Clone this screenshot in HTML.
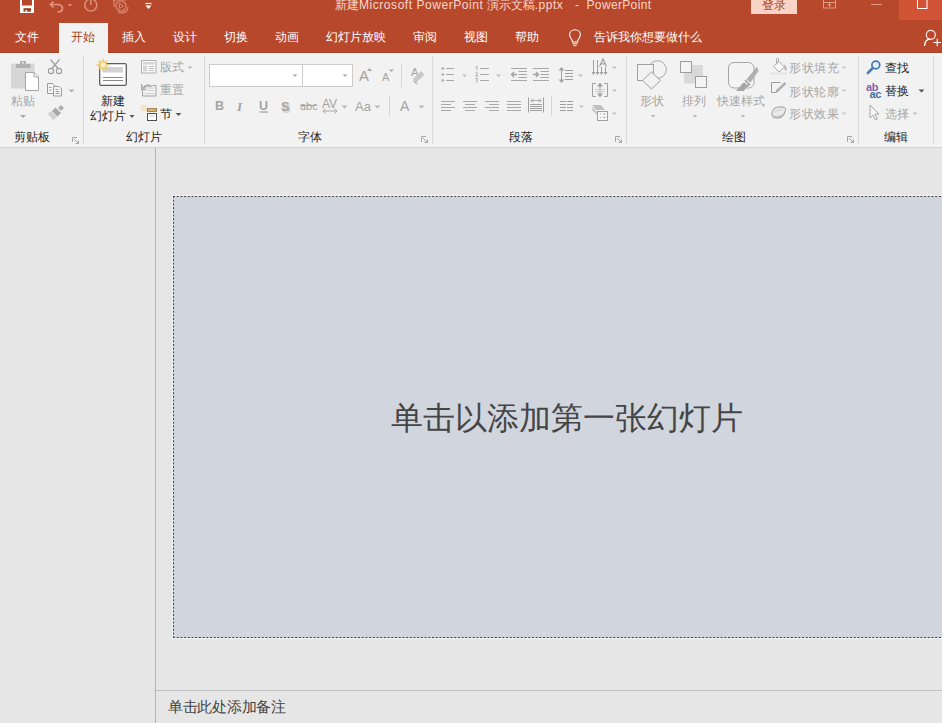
<!DOCTYPE html>
<html><head><meta charset="utf-8">
<style>
*{margin:0;padding:0;box-sizing:border-box}
html,body{width:942px;height:723px;overflow:hidden;background:#e6e6e6;font-family:"Liberation Sans",sans-serif}
.a{position:absolute;white-space:nowrap}
#top{position:absolute;left:0;top:0;width:942px;height:53px;background:#b8482b}
#ribbon{position:absolute;left:0;top:53px;width:942px;height:95px;background:#f2f2f2;border-bottom:1px solid #d4d4d4}
.tab{position:absolute;top:29px;font-size:12px;line-height:17px;color:#fff;white-space:nowrap}
.sep{position:absolute;top:56px;width:1px;height:88px;background:#dadada}
.gl{position:absolute;top:129px;font-size:12px;line-height:17px;color:#262626;white-space:nowrap}
.t{position:absolute;font-size:12px;line-height:17px;color:#262626;white-space:nowrap}
.g{color:#a6a6a6}
.L{position:absolute;font-family:"Liberation Sans",sans-serif;color:#a3a3a3;white-space:nowrap;line-height:1}
</style></head><body>
<div id="top"></div>
<div class="a" style="left:59px;top:23px;width:49px;height:31px;background:#f2f2f2"></div>
<div id="ribbon"></div>
<div class="a" style="left:0;top:52px;width:59px;height:1px;background:#a9442b"></div><div class="a" style="left:108px;top:52px;width:834px;height:1px;background:#a9442b"></div>
<div class="a" style="left:0;top:53px;width:942px;height:1px;background:#f8f5ef"></div>
<!-- title -->
<div class="a" style="left:335px;top:-3px;font-size:12px;line-height:17px;color:#f7d6cb">新建<span style="letter-spacing:.55px">Microsoft PowerPoint</span> 演示文稿<span style="letter-spacing:.5px">.pptx</span></div>
<div class="a" style="left:575px;top:-3px;font-size:12px;line-height:17px;color:#f7d6cb">-</div>
<div class="a" style="left:586.5px;top:-3px;font-size:12px;line-height:17px;color:#f7d6cb;letter-spacing:.35px">PowerPoint</div>
<div class="a" style="left:751px;top:0;width:46px;height:14px;background:#f9d3c5"></div>
<div class="a" style="left:761.5px;top:-3px;font-size:12px;line-height:17px;color:#a33f22">登录</div>
<!-- tabs -->
<div class="tab" style="left:15px">文件</div>
<div class="tab" style="left:71px;color:#a33f28">开始</div>
<div class="tab" style="left:122px">插入</div>
<div class="tab" style="left:173px">设计</div>
<div class="tab" style="left:224px">切换</div>
<div class="tab" style="left:275px">动画</div>
<div class="tab" style="left:326px">幻灯片放映</div>
<div class="tab" style="left:413px">审阅</div>
<div class="tab" style="left:464px">视图</div>
<div class="tab" style="left:515px">帮助</div>
<div class="tab" style="left:594px">告诉我你想要做什么</div>
<!-- separators -->
<div class="sep" style="left:83px"></div>
<div class="sep" style="left:204px"></div>
<div class="sep" style="left:432px"></div>
<div class="sep" style="left:626px"></div>
<div class="sep" style="left:858px"></div>
<div class="sep" style="left:933px"></div>
<!-- group labels -->
<div class="gl" style="left:14px">剪贴板</div>
<div class="gl" style="left:126px">幻灯片</div>
<div class="gl" style="left:298px">字体</div>
<div class="gl" style="left:509px">段落</div>
<div class="gl" style="left:722px">绘图</div>
<div class="gl" style="left:884px">编辑</div>
<!-- ribbon texts -->
<div class="t g" style="left:11px;top:93px">粘贴</div>
<div class="t" style="left:101px;top:93px">新建</div>
<div class="t" style="left:90px;top:108px">幻灯片</div>
<div class="t g" style="left:160px;top:59px">版式</div>
<div class="t g" style="left:160px;top:82px">重置</div>
<div class="t" style="left:160px;top:106px">节</div>
<div class="t g" style="left:640px;top:93px">形状</div>
<div class="t g" style="left:682px;top:93px">排列</div>
<div class="t g" style="left:717px;top:93px">快速样式</div>
<div class="t g" style="left:789px;top:60px;letter-spacing:.6px">形状填充</div>
<div class="t g" style="left:789px;top:83.5px;letter-spacing:.6px">形状轮廓</div>
<div class="t g" style="left:789px;top:106px;letter-spacing:.6px">形状效果</div>
<div class="t" style="left:885px;top:60px">查找</div>
<div class="t" style="left:885px;top:83px">替换</div>
<div class="t g" style="left:885px;top:106px">选择</div>
<!-- latin glyphs -->
<div class="L" style="left:359px;top:67.5px;font-size:15px">A</div>
<div class="L" style="left:382px;top:71.5px;font-size:11px">A</div>
<div class="L" style="left:411px;top:67px;font-size:11px">A</div>
<div class="L" style="left:215px;top:100px;font-size:12.5px;font-weight:bold">B</div>
<div class="L" style="left:237px;top:100px;font-size:13px;font-style:italic;font-weight:bold;font-family:'Liberation Serif',serif">I</div>
<div class="L" style="left:259px;top:100px;font-size:12.5px;font-weight:bold">U</div>
<div class="L" style="left:281px;top:100px;font-size:13px;font-weight:bold;text-shadow:1px 1.5px 1px #cfcfcf">S</div>
<div class="L" style="left:300px;top:101px;font-size:11px">abc</div>
<div class="L" style="left:322px;top:98px;font-size:12px">AV</div>
<div class="L" style="left:355px;top:100px;font-size:13px">Aa</div>
<div class="L" style="left:400px;top:99px;font-size:14px">A</div>
<div class="L" style="left:866px;top:83px;font-size:11px;font-weight:bold;color:#8262ad;line-height:8px;letter-spacing:-.3px">ab</div>
<div class="L" style="left:869.5px;top:89.5px;font-size:11px;font-weight:bold;color:#3e6f9e;line-height:8px;letter-spacing:-.3px">ac</div>
<svg class="a" style="left:0;top:0" width="942" height="723" viewBox="0 0 942 723">
<defs>
<radialGradient id="sun"><stop offset="0" stop-color="#fff8d8"/><stop offset=".55" stop-color="#f4d27a"/><stop offset="1" stop-color="#f0c060" stop-opacity=".2"/></radialGradient>
</defs>
<g fill="none" stroke-width="1">
<!-- QAT -->
<rect x="20" y="-1" width="14" height="14" fill="#fff"/>
<rect x="22" y="-1" width="10" height="6.5" fill="#b7472a"/>
<rect x="23.5" y="8.2" width="7.5" height="3.5" fill="#a5401f"/>
<rect x="25.5" y="10" width="1.5" height="1.7" fill="#fff"/>
<path d="M51 4.5 H57 C60.5 4.5 62.5 6.3 62.5 8.3 C62.5 10.5 60.5 12 57.5 12" stroke="#df9580" stroke-width="1.7"/>
<path d="M53.5 1.5 L50.5 4.5 L53.5 7.5" stroke="#df9580" stroke-width="1.7"/>
<rect x="68.5" y="4" width="3" height="2" fill="#d98d77"/>
<circle cx="90.8" cy="5" r="6" stroke="#d98d77" stroke-width="1.6"/>
<path d="M90.8 -2 V5" stroke="#d98d77" stroke-width="1.6"/>
<path d="M113 0 H126 M114 0 V7 M118 12 C122 14 128 12 128 7" stroke="#d98d77" stroke-width="1.2"/>
<circle cx="121" cy="6" r="5" stroke="#d98d77" stroke-width="1.2"/>
<path d="M119.5 3.5 L123.5 6 L119.5 8.5 Z" stroke="#d98d77"/>
<path d="M145.5 3.5 H151.5" stroke="#fff" stroke-width="1.2"/>
<path d="M145.5 5.5 H151.5 L148.5 9 Z" fill="#fff"/>
<!-- window buttons -->
<rect x="823.5" y="-3" width="12" height="11" stroke="#e09a86"/>
<path d="M823.5 2.5 H835.5 M829.5 7.5 V3.5 M827.5 5.5 L829.5 3.5 L831.5 5.5" stroke="#e09a86"/>
<path d="M871 4.5 H882" stroke="#e09a86"/>
<rect x="899" y="0" width="43" height="20" fill="#d05335"/>
<rect x="917.5" y="-3" width="9.5" height="11.5" stroke="#fff"/>
<!-- tell me bulb, person -->
<path d="M572.3 40.5 C570.8 38.5 569.6 37 569.6 34.8 C569.6 31.8 572 29.8 575 29.8 C578 29.8 580.4 31.8 580.4 34.8 C580.4 37 579.2 38.5 577.7 40.5 V42 H572.3 Z" stroke="#fff" stroke-width="1.1"/>
<path d="M572.5 43.8 H577.5 M573.5 45.6 H576.5" stroke="#fff" stroke-width="1"/>
<circle cx="930.8" cy="34.8" r="4.5" stroke="#fdeee8" stroke-width="1.2"/>
<path d="M924.5 46 C925 41 927 39 930 39" stroke="#fff" stroke-width="1.3"/>
<path d="M933.5 42.5 H941 M937.2 38.8 V46.2" stroke="#fff" stroke-width="1.1"/>

<!-- clipboard -->
<rect x="11" y="63.5" width="23.5" height="25" fill="#d6d6d6"/>
<rect x="16" y="64" width="14.5" height="4" fill="#b1b1b1"/>
<rect x="20" y="61" width="6" height="3.5" fill="#b1b1b1"/>
<rect x="22" y="62" width="2" height="1.5" fill="#e8e8e8"/>
<path d="M25.5 72.5 H34 L38.5 77 V90.5 H25.5 Z" fill="#fff" stroke="#a6a6a6"/>
<path d="M34 72.5 V77 H38.5" stroke="#a6a6a6"/>
<path d="M20 115 L26 115 L23 118 Z" fill="#a6a6a6"/>
<!-- scissors -->
<path d="M50.5 59.5 L58.5 69 M59.5 59.5 L51.5 69" stroke="#a0a0a0" stroke-width="1.3"/>
<circle cx="51" cy="71" r="2.6" stroke="#a0a0a0" stroke-width="1.2"/>
<circle cx="59" cy="71" r="2.6" stroke="#a0a0a0" stroke-width="1.2"/>
<!-- copy -->
<path d="M47.5 83.5 H52.5 L54.5 85.5 V93.5 H47.5 Z" fill="#f6f6f6" stroke="#9c9c9c"/>
<path d="M53.5 86.5 H59 L61.5 89 V96 H53.5 Z" fill="#f6f6f6" stroke="#9c9c9c"/>
<path d="M49 87.5 H51.5 M49 90 H51.5 M55.5 89.5 H58 M55.5 91.5 H59.5 M55.5 93.5 H59.5" stroke="#a0a0a0"/>
<path d="M68.5 89.5 H74.5 L71.5 92.5 Z" fill="#b0b0b0"/>
<!-- painter -->
<path d="M61 105 L64 108 L61 111 L58 108 Z" fill="#b0b0b0"/>
<path d="M55.5 107.5 L61 113 L57.5 116.5 L52 111 Z" fill="#a8a8a8"/>
<path d="M51.8 111.3 L57.2 116.7 L53.5 120.5 L47.5 113.5 Z" fill="#d2d2d2"/>
<!-- new slide -->
<rect x="99.7" y="63.7" width="26.6" height="21.6" rx="1.2" fill="#fff" stroke="#5e5e5e" stroke-width="1.3"/>
<rect x="103" y="67" width="20" height="5.5" fill="#d2d2d2"/>
<path d="M103 77.5 H123 M103 80.5 H123" stroke="#7c7c7c" stroke-width=".9"/>
<g stroke="#efc770" stroke-width="1.6" opacity=".85"><path d="M103 58.5 V71.5 M96.5 65 H109.5 M98.5 60.5 L107.5 69.5 M107.5 60.5 L98.5 69.5"/></g>
<circle cx="103" cy="65" r="5" fill="url(#sun)"/>
<circle cx="103" cy="65" r="2.2" fill="#fff6d0"/>
<path d="M129.5 115 H134.5 L132 118 Z" fill="#5a5a5a"/>
<!-- layout -->
<rect x="141.5" y="60.5" width="14.5" height="12.5" fill="#fafafa" stroke="#b0b0b0"/>
<rect x="143" y="62" width="11.5" height="2.5" fill="#d6d6d6"/>
<rect x="143" y="65.5" width="4" height="6" fill="#d6d6d6"/>
<path d="M148.5 66.5 H154 M148.5 68.5 H154 M148.5 70.5 H154" stroke="#c2c2c2"/>
<path d="M187.5 66.5 H192.5 L190 69 Z" fill="#b8b8b8"/>
<!-- reset -->
<path d="M152.5 85.5 H156 V96 H142.5 V90.5" fill="none" stroke="#a0a0a0"/>
<path d="M144.5 88 H154 M147 90.5 H154 M144.5 93.5 H154" stroke="#d2d2d2"/>
<path d="M143 88.5 C145 85.5 148 84.5 151.5 86.5" stroke="#a6a6a6" stroke-width="1.6"/>
<path d="M141.8 84 V89.5 H146" stroke="#a6a6a6" stroke-width="1.4"/>
<!-- section -->
<path d="M144 104.5 V111.5 M140.5 108 H147.5 M141.5 105.5 L146.5 110.5 M146.5 105.5 L141.5 110.5" stroke="#f2c890" stroke-width=".9"/>
<circle cx="144" cy="108" r="1.3" fill="#fff0c8"/>
<rect x="147.5" y="108.7" width="9" height="2.6" fill="#ecc070" stroke="#8c6a3a" stroke-width=".9"/>
<rect x="147.5" y="113.5" width="9" height="7" fill="#fff" stroke="#4e4e4e"/>
<path d="M149.5 116 H154.5" stroke="#c0c0c0"/>
<path d="M175.5 113 H181.5 L178.5 116 Z" fill="#5a5a5a"/>

<!-- font group -->
<rect x="209.5" y="64.5" width="93" height="22" fill="#fff" stroke="#cbcbcb"/>
<rect x="302.5" y="64.5" width="50" height="22" fill="#fff" stroke="#cbcbcb"/>
<path d="M292.5 74.5 H297.5 L295 77 Z" fill="#b0b0b0"/>
<path d="M342.5 74.5 H347.5 L345 77 Z" fill="#b0b0b0"/>
<path d="M367 71 L369.5 68 L372 71 Z" fill="#a8a8a8"/>
<path d="M389 69.5 L391.5 72 L394 69.5 Z" fill="#a8a8a8"/>
<path d="M401.5 64 V87" stroke="#d6d6d6"/>
<path d="M413 79 L421 71 L424.5 74.5 L416.5 82.5 Z" fill="#c8c8c8"/>
<path d="M413.5 80.5 L417 84" stroke="#b8b8b8" stroke-width="1.5"/>
<path d="M341.5 105.5 H347.5 L344.5 108.5 Z" fill="#b8b8b8"/>
<path d="M374.5 105.5 H380.5 L377.5 108.5 Z" fill="#b8b8b8"/>
<path d="M389.5 96 V117" stroke="#d6d6d6"/>
<path d="M418.5 105.5 H424.5 L421.5 108.5 Z" fill="#b8b8b8"/>
<path d="M323 111 H337 M323 111 L325.5 108.5 M323 111 L325.5 113.5 M337 111 L334.5 108.5 M337 111 L334.5 113.5" stroke="#a8a8a8"/>
<path d="M259.5 112 H268" stroke="#a0a0a0" stroke-width="1.2"/>
<path d="M300 105.5 H316" stroke="#a8a8a8"/>

<!-- paragraph -->
<g fill="#a8a8a8">
<rect x="441.5" y="67.5" width="2.5" height="2"/><rect x="441.5" y="73.5" width="2.5" height="2"/><rect x="441.5" y="79.5" width="2.5" height="2"/>
</g>
<path d="M446 68.5 H454 M446 74.5 H454 M446 80.5 H454" stroke="#a8a8a8"/>
<path d="M480 68.5 H489 M480 74.5 H489 M480 80.5 H489" stroke="#a8a8a8"/>
<path d="M475.5 67 L477 66.5 V70.5 M475.5 73 C476.5 72 478 72.5 477.5 74 L475.5 76 H478 M475.5 78.5 H477.5 L476.5 80 C478 80 478 82 475.5 82" stroke="#a8a8a8" stroke-width=".9"/>
<path d="M462 74.5 H467 L464.5 77 Z" fill="#c0c0c0"/>
<path d="M496 74.5 H501 L498.5 77 Z" fill="#c0c0c0"/>
<path d="M511 68.5 H527 M518.5 71.5 H527 M518.5 74.5 H527 M518.5 77.5 H527 M511 80.5 H527" stroke="#a8a8a8"/>
<path d="M517 74.5 H511.5 M514 72 L511.5 74.5 L514 77" stroke="#a0a0a0" stroke-width="1.3"/>
<path d="M533 68.5 H549 M540.5 71.5 H549 M540.5 74.5 H549 M540.5 77.5 H549 M533 80.5 H549" stroke="#a8a8a8"/>
<path d="M533 74.5 H538.5 M536 72 L538.5 74.5 L536 77" stroke="#a0a0a0" stroke-width="1.3"/>
<!-- line spacing -->
<path d="M561.5 69 V81" stroke="#a0a0a0"/>
<path d="M558.5 70.5 L561.5 67 L564.5 70.5 Z M558.5 79.5 L561.5 83 L564.5 79.5 Z" fill="#a0a0a0"/>
<path d="M565 70.5 H573 M565 73.5 H573 M565 76.5 H573 M565 79.5 H573" stroke="#a0a0a0"/>
<path d="M578 74.5 H583 L580.5 77 Z" fill="#c0c0c0"/>
<!-- text direction -->
<path d="M593.5 60 V73 M597.5 60 V73 M601.5 67 V73 M605.5 67 V73" stroke="#a0a0a0"/>
<path d="M591.5 72 L593.5 75 L595.5 72 Z M595.5 72 L597.5 75 L599.5 72 Z M599.5 72 L601.5 75 L603.5 72 Z M603.5 72 L605.5 75 L607.5 72 Z" fill="#a0a0a0"/>
<path d="M599.5 66.5 L603 59 L606.5 66.5 M600.8 63.8 H605.2" stroke="#a0a0a0" stroke-width="1.2"/>
<path d="M612 66.5 H617 L614.5 69 Z" fill="#c0c0c0"/>
<path d="M596 83.5 H592.5 V96.5 H596 M604 83.5 H607.5 V96.5 H604" stroke="#a0a0a0"/>
<path d="M600 85 V95" stroke="#a0a0a0"/>
<path d="M597 86.5 L600 82.5 L603 86.5 Z M597 93.5 L600 97.5 L603 93.5 Z" fill="#a0a0a0"/>
<path d="M595 89.5 H605 M595 91.5 H605" stroke="#d0d0d0"/>
<path d="M612 89.5 H617 L614.5 92 Z" fill="#c0c0c0"/>
<path d="M592 105 H601 L605 110 H596 Z" fill="#c0c0c0"/>
<path d="M592 107 L597 112 V115 L592 110 Z" fill="#c8c8c8"/>
<rect x="597.5" y="111.5" width="10" height="9" fill="#f6f6f6" stroke="#a0a0a0"/>
<path d="M600 114 H601 M603 114 H605.5 M600 117.5 H601 M603 117.5 H605.5" stroke="#a8a8a8"/>
<path d="M612 112.5 H617 L614.5 115 Z" fill="#c0c0c0"/>
<!-- align -->
<path d="M441 101.5 H455 M441 104.5 H451 M441 107.5 H455 M441 110.5 H451" stroke="#a8a8a8"/>
<path d="M463 101.5 H477 M465 104.5 H475 M463 107.5 H477 M465 110.5 H475" stroke="#a8a8a8"/>
<path d="M485 101.5 H499 M489 104.5 H499 M485 107.5 H499 M489 110.5 H499" stroke="#a8a8a8"/>
<path d="M507 101.5 H521 M507 104.5 H521 M507 107.5 H521 M507 110.5 H521" stroke="#a8a8a8"/>
<path d="M528.5 97.5 V112.5 M543.5 97.5 V112.5 M530 104.5 H542 M530 106.5 H542 M530 108.5 H542 M530 110.5 H542" stroke="#a0a0a0"/>
<path d="M531 100.5 H541 M533 98.5 L531 100.5 L533 102.5 M539 98.5 L541 100.5 L539 102.5" stroke="#a8a8a8"/>
<path d="M551.5 96 V116" stroke="#d6d6d6"/>
<path d="M560 101.5 H566 M567 101.5 H573 M560 104.5 H566 M567 104.5 H573 M560 107.5 H566 M567 107.5 H573 M560 110.5 H566 M567 110.5 H573" stroke="#a0a0a0"/>
<path d="M579 105.5 H584 L581.5 108 Z" fill="#c0c0c0"/>

<!-- drawing -->
<circle cx="657.5" cy="69.5" r="8.8" fill="#f2f2f2" stroke="#a8a8a8"/>
<rect x="637.5" y="64.5" width="16" height="16" fill="#f2f2f2" stroke="#a0a0a0"/>
<path d="M651.5 72 L660.5 80.5 L651.5 89 L642.5 80.5 Z" fill="#f2f2f2" stroke="#a0a0a0"/>
<path d="M650.5 115 H655.5 L653 117.5 Z" fill="#b8b8b8"/>
<rect x="684" y="65" width="19" height="18.5" fill="#d9d9d9"/>
<rect x="680.5" y="61.5" width="11" height="11" fill="#f4f4f4" stroke="#9e9e9e"/>
<rect x="695.5" y="76.5" width="11" height="11" fill="#f4f4f4" stroke="#9e9e9e"/>
<path d="M692.5 115 H697.5 L695 117.5 Z" fill="#b8b8b8"/>
<rect x="728.5" y="62.5" width="25.5" height="25.5" rx="5.5" fill="#f4f4f4" stroke="#a6a6a6"/>
<path d="M746.5 79.5 L757 66.5 L758.5 71 L750.5 82.5 Z" fill="#b0b0b0"/>
<path d="M745 80 L749.5 84.5 L744 88" fill="none" stroke="#a0a0a0" stroke-width="1.6"/>
<path d="M736 91 L743 83 C745 82 747.5 84 746.5 86.5 L744 91 Z" fill="#a6a6a6"/>
<path d="M740.5 115 H745.5 L743 117.5 Z" fill="#b8b8b8"/>
<!-- fill/outline/effects -->
<path d="M773.5 66.5 L779 61.5 L784.5 67 L779 72 Z" fill="#f8f8f8" stroke="#a8a8a8"/>
<path d="M778.5 62 V59.5 C778.5 58 776.5 58 776.5 59.5 V64" stroke="#a8a8a8"/>
<path d="M784 64.5 C786 65.5 787.5 68 786.5 70 C785.5 71 784 70 784.5 67.5 Z" fill="#b5b5b5"/>
<rect x="770" y="72.5" width="17" height="2" fill="#e4e4e4"/>
<path d="M780.5 82.5 H771.5 V92.5 H776" stroke="#9c9c9c"/>
<path d="M777 91 L785.5 83" stroke="#b0b0b0" stroke-width="2.6"/>
<path d="M776.2 92.3 L777.5 90.5" stroke="#888" stroke-width="1.2"/>
<path d="M772 113.5 C772 110 775 107 779 107 H783 C785 107 786 108.5 785.5 110.5 L784 114 C783 116.5 781 118 778 118 H775 C772.5 118 772 116 772 113.5 Z" fill="#e8e8e8" stroke="#9c9c9c"/>
<path d="M773 116 C775 117.5 781 117.5 784 114" stroke="#b8b8b8" stroke-width="1.5"/>
<path d="M775 111 L782 109.5" stroke="#d0d0d0"/>
<path d="M841.5 66.5 H846.5 L844 69 Z" fill="#c8c8c8"/>
<path d="M841.5 89.5 H846.5 L844 92 Z" fill="#c8c8c8"/>
<path d="M841.5 112.5 H846.5 L844 115 Z" fill="#c8c8c8"/>
<!-- editing -->
<circle cx="875.8" cy="65" r="3.9" fill="#e8f0f8" stroke="#3f78b5" stroke-width="1.7"/>
<path d="M872.8 68 L867.8 73" stroke="#4f7fae" stroke-width="2.6" stroke-linecap="round"/>
<path d="M918.5 89.5 H924.5 L921.5 92.5 Z" fill="#555"/>
<path d="M870 105 V118 L873 115 L875.5 120 L877.5 119 L875 114 H879 Z" fill="#f6f6f6" stroke="#a8a8a8"/>
<path d="M912.5 112.5 H917.5 L915 115 Z" fill="#c0c0c0"/>
<!-- launchers -->
<g stroke="#a6a6a6"><path d="M72.5 142 V137.5 H77 M74 139 L78.5 143.5 M78.5 140.5 V143.5 H75.5"/>
<path d="M421.5 142 V136.5 H426 M423 138 L427.5 142.5 M427.5 139.5 V142.5 H424.5"/>
<path d="M615.5 142 V136.5 H620 M617 138 L621.5 142.5 M621.5 139.5 V142.5 H618.5"/>
<path d="M847.5 142 V136.5 H852 M849 138 L853.5 142.5 M853.5 139.5 V142.5 H850.5"/></g>
</g>
</svg>

<!-- main -->
<div class="a" style="left:155px;top:148px;width:1px;height:575px;background:#b4b4b4"></div>
<div class="a" style="left:172px;top:195px;width:770px;height:444px;background:#f3f3f3"></div>
<div class="a" style="left:173px;top:196px;width:769px;height:442px;background:#d1d5dd"></div>
<svg class="a" style="left:0;top:0" width="942" height="723"><g fill="none" stroke="#454545" stroke-dasharray="2 1.7">
<path d="M173 196.5 H942"/><path d="M173 637.5 H942"/><path d="M173.5 196 V638"/></g></svg>
<div class="a" style="left:391px;top:396px;font-size:32px;line-height:44px;color:#454545">单击以添加第一张幻灯片</div>
<div class="a" style="left:156px;top:690px;width:786px;height:1px;background:#c0c0c0"></div>
<div class="a" style="left:168px;top:696.5px;font-size:14.67px;letter-spacing:-.28px;line-height:20px;color:#424242">单击此处添加备注</div>
</body></html>
